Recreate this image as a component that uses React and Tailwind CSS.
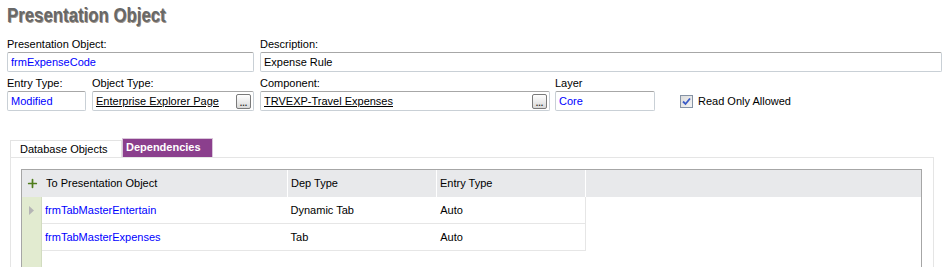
import { Plus } from 'lucide-react';

const FONT = "font-['Liberation_Sans',Arial,sans-serif]";

function Field({ label, width, children, button }) {
  return (
    <div className="flex flex-col" style={{ width }}>
      <div className="h-[13px] leading-[13px] text-black">{label}</div>
      <div className="mt-[1px] h-[20px] flex items-center border border-[#c9d0d6] border-t-[#a7a7a7] rounded-[2px] bg-white pl-[3px] pr-[2px]">
        <div className="flex-1 truncate">{children}</div>
        {button && (
          <div className="w-[15px] h-[15px] flex items-end justify-center border border-[#7a7a7a] rounded-[2px] bg-gradient-to-b from-[#ffffff] to-[#d9d9d9] text-[9px] leading-[10px] font-bold text-[#333]">
            ...
          </div>
        )}
      </div>
    </div>
  );
}

const rows = [
  { name: 'frmTabMasterEntertain', dep: 'Dynamic Tab', entry: 'Auto', current: true },
  { name: 'frmTabMasterExpenses', dep: 'Tab', entry: 'Auto' },
];

export default function App() {
  return (
    <div className={`w-[946px] h-[267px] bg-white overflow-hidden text-[11px] ${FONT}`}>
      <div className="pl-[7px] pt-[3px] h-[38px]">
        <h1 className="inline-block origin-left scale-x-[0.84] font-bold text-[20px] leading-[24px] text-[#686868] [text-shadow:1px_1px_0_rgba(95,75,55,0.6)]">
          Presentation Object
        </h1>
      </div>

      <div className="pl-[7px] flex gap-[6px]">
        <Field label="Presentation Object:" width={247}>
          <span className="text-[#0000ff]">frmExpenseCode</span>
        </Field>
        <Field label="Description:" width={682}>
          <span className="text-black">Expense Rule</span>
        </Field>
      </div>

      <div className="pl-[7px] mt-[5px] flex items-start">
        <Field label="Entry Type:" width={79}>
          <span className="text-[#0000ff]">Modified</span>
        </Field>
        <div className="w-[6px]" />
        <Field label="Object Type:" width={162} button>
          <span className="underline text-black">Enterprise Explorer Page</span>
        </Field>
        <div className="w-[6px]" />
        <Field label="Component:" width={290} button>
          <span className="underline text-black">TRVEXP-Travel Expenses</span>
        </Field>
        <div className="w-[5px]" />
        <Field label="Layer" width={100}>
          <span className="text-[#0000ff]">Core</span>
        </Field>
        <div className="ml-[25px] mt-[16px] flex items-center gap-[5px]">
          <div className="w-[13px] h-[13px] border border-[#8593a5] bg-gradient-to-br from-[#dcdcdc] to-[#f4f4f4] flex items-center justify-center">
            <svg width="9" height="9" viewBox="0 0 9 9">
              <path d="M1 4.5 L3.5 7 L8 1.5" fill="none" stroke="#3a5bc7" strokeWidth="1.8" />
            </svg>
          </div>
          <span className="text-black">Read Only Allowed</span>
        </div>
      </div>

      <div className="mt-[27px] ml-[10px] w-[924px]">
        <div className="flex items-end h-[19px]">
          <div className="w-[112px] h-[17px] border border-b-0 border-[#e3e3e3] bg-white pl-[9px] leading-[16px] text-black">
            Database Objects
          </div>
          <div className="w-[91px] h-[19px] bg-[#8b3f8d] border border-b-0 border-[#d9c6da] pl-[3px] leading-[16px] font-bold text-white">
            Dependencies
          </div>
        </div>
        <div className="h-[120px] border-t border-l border-r border-[#e5e5e5] pt-[11px] pl-[10px] pr-[11px]">
          <div className="border-t border-l border-r border-[#a6a6a6] h-[110px] flex flex-col">
            <div className="h-[27px] bg-[#e8e9eb] flex items-center text-black">
              <div className="w-[20px] h-full flex items-center justify-center">
                <Plus size={13} strokeWidth={3.2} color="#4f7d1c" />
              </div>
              <div className="w-[246px] pl-[4px] border-r border-white h-full flex items-center">To Presentation Object</div>
              <div className="w-[149px] pl-[3px] border-r border-white h-full flex items-center">Dep Type</div>
              <div className="w-[149px] pl-[3px] border-r border-white h-full flex items-center">Entry Type</div>
            </div>
            <div className="flex flex-1">
              <div className="w-[20px] bg-[#e2ebd0] border-r border-[#d2dcc0] flex flex-col">
                <div className="h-[27px] flex items-center justify-center">
                  <svg width="6" height="9" viewBox="0 0 6 9">
                    <path d="M0 0 L5 4.5 L0 9 Z" fill="#b5b5b5" />
                  </svg>
                </div>
              </div>
              <div className="flex flex-col">
                {rows.map((r) => (
                  <div key={r.name} className="h-[27px] flex items-center border-b border-r border-[#e6e6e6] w-[544px]">
                    <div className="w-[246px] pl-[3px] text-[#0000ff]">{r.name}</div>
                    <div className="w-[150px] pl-[3px] text-black">{r.dep}</div>
                    <div className="w-[148px] pl-[3px] text-black">{r.entry}</div>
                  </div>
                ))}
              </div>
            </div>
          </div>
        </div>
      </div>
    </div>
  );
}
